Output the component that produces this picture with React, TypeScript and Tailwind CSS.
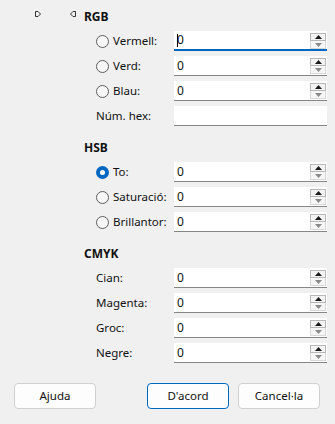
import React from 'react';

type Row = { label: string; radio?: boolean; checked?: boolean; value?: string; spin?: boolean; focused?: boolean };

function Radio({ checked }: { checked?: boolean }) {
    if (checked) {
        return (
            <span className="w-[13px] h-[13px] rounded-full bg-[#0067c0] flex items-center justify-center shrink-0">
                <span className="w-[5px] h-[5px] rounded-full bg-white" />
            </span>
        );
    }
    return <span className="w-[13px] h-[13px] rounded-full border border-[#5d5d5d] bg-[#f7f7f7] shrink-0" />;
}

function Spin() {
    return (
        <div className="absolute right-[1px] top-[2px] flex flex-col">
            <div className="w-[16px] h-[8px] border border-[#b8b8b8] bg-[#f3f3f3] flex items-center justify-center">
                <svg width="7" height="4" viewBox="0 0 7 4"><path d="M0 4 L3.5 0 L7 4 Z" fill="#1a1a1a" /></svg>
            </div>
            <div className="w-[16px] h-[8px] border border-t-0 border-[#d8d8d8] bg-[#f6f6f6] flex items-center justify-center">
                <svg width="7" height="4" viewBox="0 0 7 4"><path d="M0 0 L3.5 4 L7 0 Z" fill="#8a8a8a" /></svg>
            </div>
        </div>
    );
}

function Field({ row }: { row: Row }) {
    return (
        <div className="flex items-center h-[20px] mb-[5px]">
            <div className="w-[174px] pl-[96px] flex items-center gap-[4px] shrink-0">
                {row.radio && <Radio checked={row.checked} />}
                <span className="leading-[16px] whitespace-nowrap">{row.label}</span>
            </div>
            <div
                className={`relative w-[153px] h-[20px] bg-white border-b ${row.focused ? 'border-b-2 border-[#0067c0]' : 'border-[#868686]'} flex items-center`}
            >
                {row.focused && <span className="absolute left-[3px] top-[3px] w-[1px] h-[13px] bg-black" />}
                <span className="pl-[3px] leading-[16px] text-[12px]">{row.value}</span>
                {row.spin && <Spin />}
            </div>
        </div>
    );
}

function Header({ title, className }: { title: string; className?: string }) {
    return <div className={`pl-[84px] h-[16px] leading-[16px] text-[12px] font-bold mb-[6px] ${className ?? ''}`}>{title}</div>;
}

const rgb: Row[] = [
    { label: 'Vermell:', radio: true, value: '0', spin: true, focused: true },
    { label: 'Verd:', radio: true, value: '0', spin: true },
    { label: 'Blau:', radio: true, value: '0', spin: true },
    { label: 'Núm. hex:', value: '' },
];

const hsb: Row[] = [
    { label: 'To:', radio: true, checked: true, value: '0', spin: true },
    { label: 'Saturació:', radio: true, value: '0', spin: true },
    { label: 'Brillantor:', radio: true, value: '0', spin: true },
];

const cmyk: Row[] = [
    { label: 'Cian:', value: '0', spin: true },
    { label: 'Magenta:', value: '0', spin: true },
    { label: 'Groc:', value: '0', spin: true },
    { label: 'Negre:', value: '0', spin: true },
];

function Button({ children, primary }: { children: React.ReactNode; primary?: boolean }) {
    return (
        <button
            className={`w-[82px] h-[26px] rounded-[4px] bg-[#fdfdfd] border ${primary ? 'border-[#0067c0]' : 'border-[#d0d0d0]'} text-[#111] leading-[16px]`}
        >
            {children}
        </button>
    );
}

export default function App() {
    return (
        <div className="w-[335px] h-[424px] bg-[#f0f0f0] text-[11.5px] text-[#111] font-['Noto_Sans',sans-serif] pt-[9px] overflow-hidden flex flex-col">
            {/* RGB header with the two tree glyphs */}
            <div className="relative">
                <svg className="absolute left-[34px] top-[1px]" width="8" height="8" viewBox="0 0 8 8">
                    <path d="M1.5 1.5 H4 L6.5 4 L4 6.5 H1.5 Z" fill="none" stroke="#333" strokeWidth="1" strokeLinejoin="round" />
                </svg>
                <svg className="absolute left-[69px] top-[1px]" width="8" height="8" viewBox="0 0 8 8">
                    <path d="M6.5 1.5 H4 L1.5 4 L4 6.5 H6.5 Z" fill="none" stroke="#333" strokeWidth="1" strokeLinejoin="round" />
                </svg>
                <Header title="RGB" />
            </div>
            {rgb.map((r) => <Field key={r.label} row={r} />)}

            <Header title="HSB" className="mt-[9px]" />
            {hsb.map((r) => <Field key={r.label} row={r} />)}

            <Header title="CMYK" className="mt-[9px]" />
            {cmyk.map((r) => <Field key={r.label} row={r} />)}

            <div className="flex mt-[15px] pl-[14px]">
                <Button>Ajuda</Button>
                <div className="w-[51px]" />
                <Button primary>D'acord</Button>
                <div className="w-[9px]" />
                <Button>Cancel·la</Button>
            </div>
        </div>
    );
}
